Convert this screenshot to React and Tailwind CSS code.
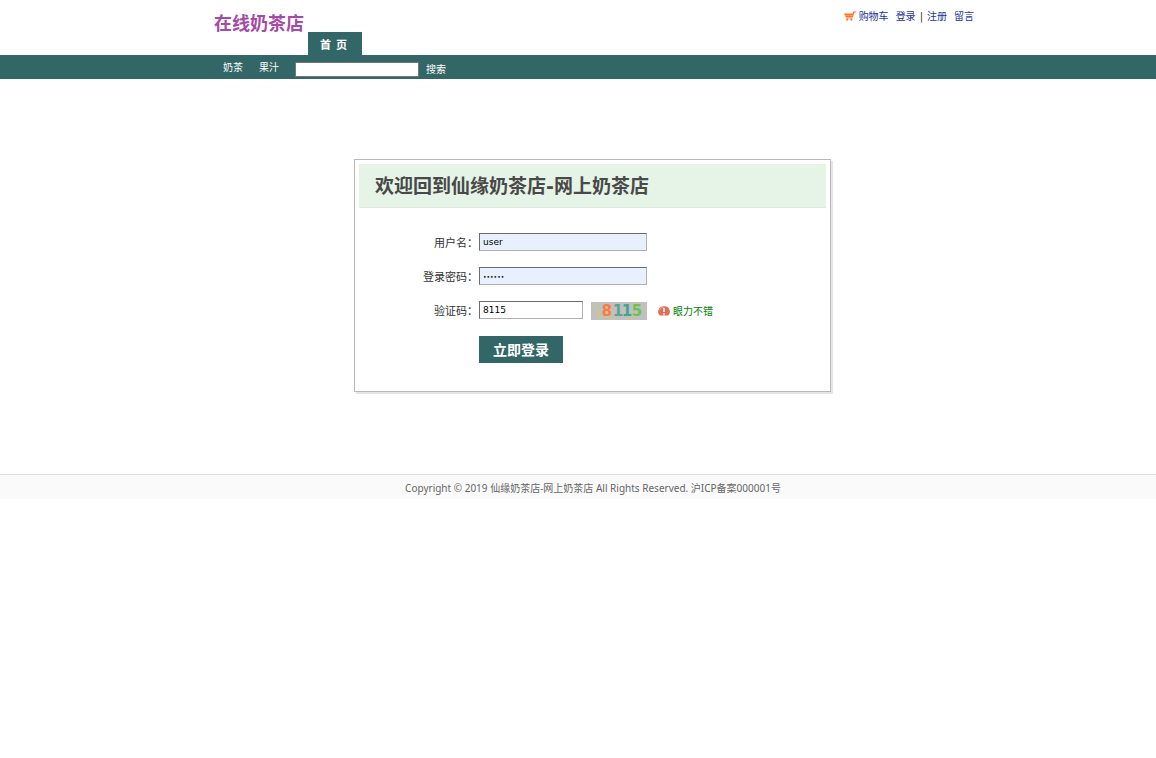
const FONT = "font-['DejaVu_Sans','Noto_Sans_CJK_SC',sans-serif]";
const CJK = "font-['Noto_Sans_CJK_SC',sans-serif]";
const FIELD =
  "h-[18px] border border-t-[#6b6b70] border-l-[#6b6b70] border-r-[#b0b0b0] border-b-[#b0b0b0] px-[3px] leading-[14px] text-black outline-none";

function CartIcon() {
  return (
    <svg width="12" height="10" viewBox="0 0 12 10" aria-hidden="true">
      <path d="M0 2.6h8.6L9.4.4H12v1.2h-1.6L8.8 6.6H1.9z" fill="#ff7420" />
      <path d="M1 4.5h8" stroke="#ffb27f" strokeWidth=".6" />
      <path d="M2.2 7.2h6" stroke="#ff9a5c" strokeWidth=".8" />
      <circle cx="3.2" cy="8.6" r="1.1" fill="#ff7420" />
      <circle cx="7.4" cy="8.6" r="1.1" fill="#ff7420" />
    </svg>
  );
}

function Captcha() {
  return (
    <svg width="56" height="18" viewBox="0 0 56 18" role="img" aria-label="8115">
      <rect width="56" height="18" fill="#c0c0c0" />
      <g fill="none" stroke="#cfcf70" strokeWidth=".8">
        <path d="M2 2l7 9M7 17l8-7 9 7M14 14l8 4M46 15l9-13M35 17l12-4M4 6l5 12" />
      </g>
      <g
        fontFamily="DejaVu Sans, sans-serif"
        fontWeight="bold"
        fontSize="15"
        textAnchor="middle"
      >
        <text x="16" y="14" fill="#ff7a3d">8</text>
        <text x="27" y="14" fill="#5aa58c">1</text>
        <text x="36" y="14" fill="#3fa58c">1</text>
        <text x="46" y="14" fill="#6cc24e">5</text>
      </g>
    </svg>
  );
}

function AlertIcon() {
  return (
    <svg width="12" height="10" viewBox="0 0 12 10" aria-hidden="true">
      <path d="M2 9.6A5.4 5.4 0 0 1 6 .2 5.4 5.4 0 0 1 10 9.6z" fill="#dc6e5c" />
      <path d="M1.7 4A4.6 4.6 0 0 1 6 1" fill="none" stroke="#efaa9c" strokeWidth="1" />
      <path d="M6 2v4M6 7.2v1.5" stroke="#fff" strokeWidth="1.5" />
    </svg>
  );
}

function Row({ id, label, children }) {
  return (
    <div className="flex h-[18px] items-center">
      <label
        htmlFor={id}
        className={`${CJK} w-[120px] shrink-0 pr-px text-right text-[11px] leading-[16px] text-[#333333]`}
      >
        {label}
      </label>
      {children}
    </div>
  );
}

export default function App() {
  return (
    <div className={`${FONT} min-h-screen bg-white text-[10px] text-[#333333]`}>
      <header>
        <div className="pl-[30px]">
          <div className="mx-auto flex h-[55px] w-full max-w-[762px] justify-between pl-px">
            <div className="flex">
              <a
                href="#"
                className={`${CJK} w-[95px] pt-[9px] pl-px text-[18px] leading-[26px] font-bold whitespace-nowrap text-[#a44ba6]`}
              >
                在线奶茶店
              </a>
              <a
                href="#"
                className={`${CJK} flex h-[23px] w-[54px] items-center self-end bg-[#336666] pt-px pl-[12px] text-[11px] leading-[20px] font-bold text-white`}
              >
                首&nbsp;&nbsp;页
              </a>
            </div>
            <nav className="flex h-[32px] items-center text-[10px] text-[#223399]">
              <a href="#" className="flex items-center gap-[3px]">
                <CartIcon />
                购物车
              </a>
              <a href="#" className="ml-[7px]">登录</a>
              <span className="mx-[4px] text-[#333333]">|</span>
              <a href="#">注册</a>
              <a href="#" className="ml-[7px]">留言</a>
            </nav>
          </div>
        </div>
        <div className="bg-[#336666] pl-[30px]">
          <form className="mx-auto flex h-[24px] w-full max-w-[760px] items-center pl-[10px] text-white">
            <a href="#">奶茶</a>
            <a href="#" className="ml-[16px]">果汁</a>
            <input
              type="text"
              aria-label="搜索"
              className="mt-[4px] ml-[16px] h-[15px] w-[124px] rounded-[1px] border border-[#767676] bg-white px-[2px] text-[10px] text-black"
            />
            <button type="button" className="mt-[4px] ml-[7px]">搜索</button>
          </form>
        </div>
      </header>

      <main className="pt-[80px] pl-[29px]">
        <section className="mx-auto w-full max-w-[477px] border border-[#b8b8b8] bg-white px-[4px] pt-[4px] pb-[28px] shadow-[2px_2px_0_#e6e6e6]">
          <h1 className="h-[44px] border-b border-[#e0e8e0] bg-[#e6f4e7] pl-[16px] text-[19px] leading-[44px] font-bold whitespace-nowrap text-[#494949]">
            欢迎回到仙缘奶茶店-网上奶茶店
          </h1>
          <form className="flex flex-col gap-[16px] pt-[25px]">
            <Row id="user" label="用户名：">
              <input id="user" type="text" defaultValue="user" className={`${FIELD} w-[168px] bg-[#e8f0fe] text-[9px]`} />
            </Row>
            <Row id="password" label="登录密码：">
              <input id="password" type="password" defaultValue="123456" className={`${FIELD} w-[168px] bg-[#e8f0fe] text-[6px]`} />
            </Row>
            <Row id="code" label="验证码：">
              <input id="code" type="text" defaultValue="8115" className={`${FIELD} w-[104px] bg-white text-[9px]`} />
              <span className="mt-[2px] ml-[8px] flex items-center gap-[11px]">
                <Captcha />
                <span className="flex items-center gap-[3px] text-[10px] text-[#008000]">
                  <AlertIcon />
                  眼力不错
                </span>
              </span>
            </Row>
            <button
              type="button"
              className={`${CJK} mt-px ml-[120px] h-[27px] w-[84px] bg-[#336666] text-[14px] leading-[27px] font-bold text-white`}
            >
              立即登录
            </button>
          </form>
        </section>
      </main>

      <footer className="mt-[82px] h-[25px] border-t border-[#dddddd] bg-[#fafafa] pl-[30px] text-center font-['Noto_Sans','Noto_Sans_CJK_SC',sans-serif] leading-[26px] text-[#666666]">
        Copyright © 2019 仙缘奶茶店-网上奶茶店 All Rights Reserved. 沪ICP备案000001号
      </footer>
    </div>
  );
}
